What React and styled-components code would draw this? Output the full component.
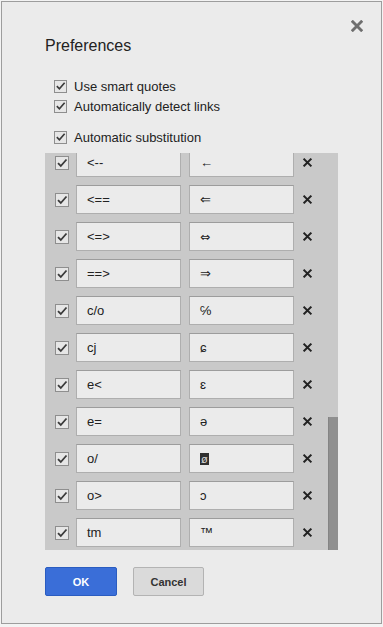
import React, { useLayoutEffect, useRef } from 'react';
import styled, { createGlobalStyle } from 'styled-components';

const rules = [
  ['(c)', '©'], ['(r)', '®'], ['+-', '±'], ['-->', '→'], ['->', '→'],
  ['...', '…'], ['1/2', '½'], ['1/3', '⅓'], ['1/4', '¼'], ['1/5', '⅕'],
  ['1/6', '⅙'], ['1/8', '⅛'], ['2/3', '⅔'], ['2/5', '⅖'], ['3/4', '¾'],
  ['3/5', '⅗'], ['3/8', '⅜'], ['4/5', '⅘'], ['5/8', '⅝'], ['7/8', '⅞'],
  ['<-', '←'], ['<--', '←'], ['<==', '⇐'], ['<=>', '⇔', 'glyph'], ['==>', '⇒'],
  ['c/o', '℅'], ['cj', 'ɕ'], ['e<', 'ɛ'], ['e=', 'ə'], ['o/', 'ø', 'selected'],
  ['o>', 'ɔ'], ['tm', '™'],
];

function Check() {
  return (
    <Box>
      <svg width="12" height="12" viewBox="0 0 12 12">
        <path d="M2 6.2 L4.8 9 L10.5 2.5" fill="none" stroke="#3a3a3a" strokeWidth="1.8" />
      </svg>
    </Box>
  );
}

function Cross({ size = 9, color = '#222', weight = 2.2 }) {
  return (
    <svg width={size} height={size} viewBox="0 0 10 10">
      <path d="M1.5 1.5 L8.5 8.5 M8.5 1.5 L1.5 8.5" stroke={color} strokeWidth={weight} strokeLinecap="square" />
    </svg>
  );
}

function Target({ text, kind }) {
  if (kind === 'selected') return <Selected>{text}</Selected>;
  if (kind === 'glyph') return <Glyph>{text}</Glyph>;
  return text;
}

function App() {
  const listRef = useRef(null);

  useLayoutEffect(() => {
    if (listRef.current) listRef.current.scrollTop = listRef.current.scrollHeight;
  }, []);

  return (
    <>
      <Global />
      <Dialog>
        <Close><Cross size={12} color="#6e6e6e" weight={2.4} /></Close>
        <Title>Preferences</Title>
        <Options>
          <Option><Check />Use smart quotes</Option>
          <Option><Check />Automatically detect links</Option>
          <Option spaced><Check />Automatic substitution</Option>
        </Options>
        <ListFrame>
          <List ref={listRef}>
            {rules.map(([from, to, kind]) => (
              <Row key={from}>
                <Check />
                <Field>{from}</Field>
                <Field><Target text={to} kind={kind} /></Field>
                <Remove><Cross /></Remove>
              </Row>
            ))}
          </List>
          <Thumb />
        </ListFrame>
        <Buttons>
          <Button primary>OK</Button>
          <Button>Cancel</Button>
        </Buttons>
      </Dialog>
    </>
  );
}

const Global = createGlobalStyle`
  body {
    margin: 0;
    background: #f3f3f3;
    font-family: "Liberation Sans", Arial, sans-serif;
  }
`;

const Dialog = styled.div`
  position: relative;
  box-sizing: border-box;
  width: 381px;
  height: 623px;
  margin: 1px 0 0 1px;
  border: 1px solid #9d9d9d;
  background: #ebebeb;
  padding: 34px 0 0 43px;
  display: flex;
  flex-direction: column;
`;

const Close = styled.div`
  position: absolute;
  top: 18px;
  right: 18px;
  display: flex;
`;

const Title = styled.div`
  font-size: 16px;
  line-height: 20px;
  color: #222;
`;

const Options = styled.div`
  display: flex;
  flex-direction: column;
  margin: 20px 0 0 9px;
`;

const Option = styled.label`
  display: flex;
  align-items: center;
  gap: 7px;
  height: 20px;
  margin-top: ${p => (p.spaced ? '11px' : '0')};
  font-size: 13px;
  color: #222;
`;

const Box = styled.span`
  box-sizing: border-box;
  width: 13px;
  height: 13px;
  flex: none;
  display: flex;
  align-items: center;
  justify-content: center;
  border: 1px solid #8e8e8e;
  background: #e6e6e6;
`;

const ListFrame = styled.div`
  position: relative;
  margin-top: 6px;
  width: 293px;
  height: 397px;
  background: #c9c9c9;
`;

const List = styled.div`
  height: 100%;
  box-sizing: border-box;
  overflow: hidden;
  padding: 4px 0 3px 10px;
  display: flex;
  flex-direction: column;
  gap: 8px;
`;

const Thumb = styled.div`
  position: absolute;
  right: 0;
  bottom: 0;
  width: 10px;
  height: 133px;
  box-sizing: border-box;
  background: #8f8f8f;
  border-left: 1px solid #848484;
`;

const Row = styled.div`
  display: flex;
  align-items: center;
  flex: none;
  height: 29px;

  & > span:first-child {
    width: 14px;
    height: 14px;
    margin-right: 7px;
  }
`;

const Field = styled.div`
  box-sizing: border-box;
  width: 105px;
  height: 29px;
  margin-right: 8px;
  padding: 0 10px;
  display: flex;
  align-items: center;
  background: #ebebeb;
  border: 1px solid #aeaeae;
  border-top-color: #9c9c9c;
  font-family: "Liberation Sans", "DejaVu Sans", sans-serif;
  font-size: 13px;
  color: #222;
  white-space: nowrap;
  overflow: hidden;
`;

const Glyph = styled.span`
  font-family: "DejaVu Sans", sans-serif;
  font-size: 12px;
`;

const Selected = styled.span`
  background: #2f2f2f;
  color: #dcdcdc;
  padding: 0 1px;
  font-size: 11px;
`;

const Remove = styled.div`
  display: flex;
  margin-left: 1px;
`;

const Buttons = styled.div`
  display: flex;
  gap: 16px;
  margin-top: 17px;
`;

const Button = styled.button`
  box-sizing: border-box;
  width: ${p => (p.primary ? '72px' : '71px')};
  height: 29px;
  border-radius: 2px;
  border: 1px solid ${p => (p.primary ? '#2a5cc0' : '#b3b3b3')};
  background: ${p => (p.primary ? '#3a6ed8' : '#dadada')};
  color: ${p => (p.primary ? '#fff' : '#333')};
  font-family: "Liberation Sans", Arial, sans-serif;
  font-size: 11px;
  font-weight: bold;
  padding: 0;
`;

export default App;
